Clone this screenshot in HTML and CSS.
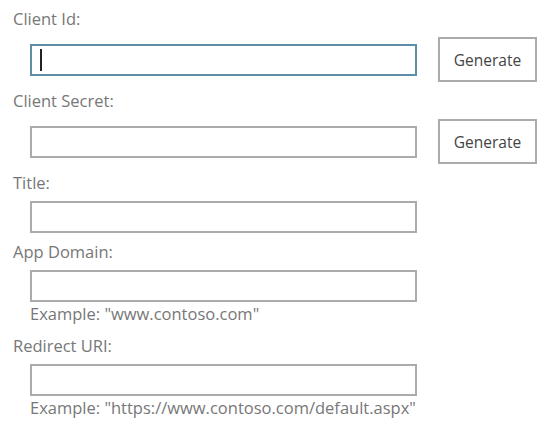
FILE: index.html
```html
<!DOCTYPE html>
<html lang="en">
<head>
<meta charset="utf-8">
<title>App registration</title>
<link rel="stylesheet" href="styles.css">
</head>
<body>
<form class="form">
  <div class="field">
    <label class="field-label" for="clientId">Client Id:</label>
    <div class="row">
      <div class="input-wrap">
        <input class="text-input is-focused" id="clientId" type="text">
        <span class="caret"></span>
      </div>
      <button class="btn" type="button">Generate</button>
    </div>
  </div>
  <div class="field">
    <label class="field-label" for="clientSecret">Client Secret:</label>
    <div class="row">
      <div class="input-wrap">
        <input class="text-input" id="clientSecret" type="text">
      </div>
      <button class="btn" type="button">Generate</button>
    </div>
  </div>
  <div class="field">
    <label class="field-label" for="title">Title:</label>
    <div class="row">
      <div class="input-wrap">
        <input class="text-input" id="title" type="text">
      </div>
    </div>
  </div>
  <div class="field">
    <label class="field-label" for="appDomain">App Domain:</label>
    <div class="row">
      <div class="input-wrap">
        <input class="text-input" id="appDomain" type="text">
      </div>
    </div>
    <div class="hint">Example: "www.contoso.com"</div>
  </div>
  <div class="field">
    <label class="field-label" for="redirectUri">Redirect URI:</label>
    <div class="row">
      <div class="input-wrap">
        <input class="text-input" id="redirectUri" type="text">
      </div>
    </div>
    <div class="hint">Example: "https://www.contoso.com/default.aspx"</div>
  </div>
</form>
</body>
</html>
```
FILE: styles.css
```css
html, body {
  margin: 0;
  padding: 0;
  background: #ffffff;
}

body {
  font-family: "Open Sans", "Noto Sans", "Liberation Sans", sans-serif;
  font-size: 16.5px;
  color: #777777;
}

.form {
  display: flex;
  flex-direction: column;
  gap: 9px;
  padding: 9px 0 0 13px;
}

.field {
  display: flex;
  flex-direction: column;
}

.field-label {
  display: block;
  height: 20px;
  line-height: 20px;
  margin-bottom: 8px;
  color: #777777;
}

.row {
  display: flex;
  align-items: center;
  gap: 21px;
  padding-left: 17px;
}

.input-wrap {
  position: relative;
  display: flex;
}

.text-input {
  box-sizing: border-box;
  width: 387px;
  height: 32px;
  margin: 0;
  padding: 0 8px;
  border: 2px solid #ababab;
  background: #ffffff;
  font: inherit;
  outline: none;
}

.text-input.is-focused {
  border-color: #5d8ea5;
}

.caret {
  position: absolute;
  left: 10px;
  top: 5px;
  width: 2px;
  height: 22px;
  background: #222222;
}

.btn {
  box-sizing: border-box;
  width: 99px;
  height: 45px;
  margin: 0;
  padding: 0;
  border: 2px solid #ababab;
  background: #ffffff;
  font-family: inherit;
  font-size: 15.5px;
  color: #444444;
}

.hint {
  height: 20px;
  line-height: 20px;
  margin-top: 2px;
  margin-bottom: 3px;
  padding-left: 17px;
  color: #777777;
}
```
